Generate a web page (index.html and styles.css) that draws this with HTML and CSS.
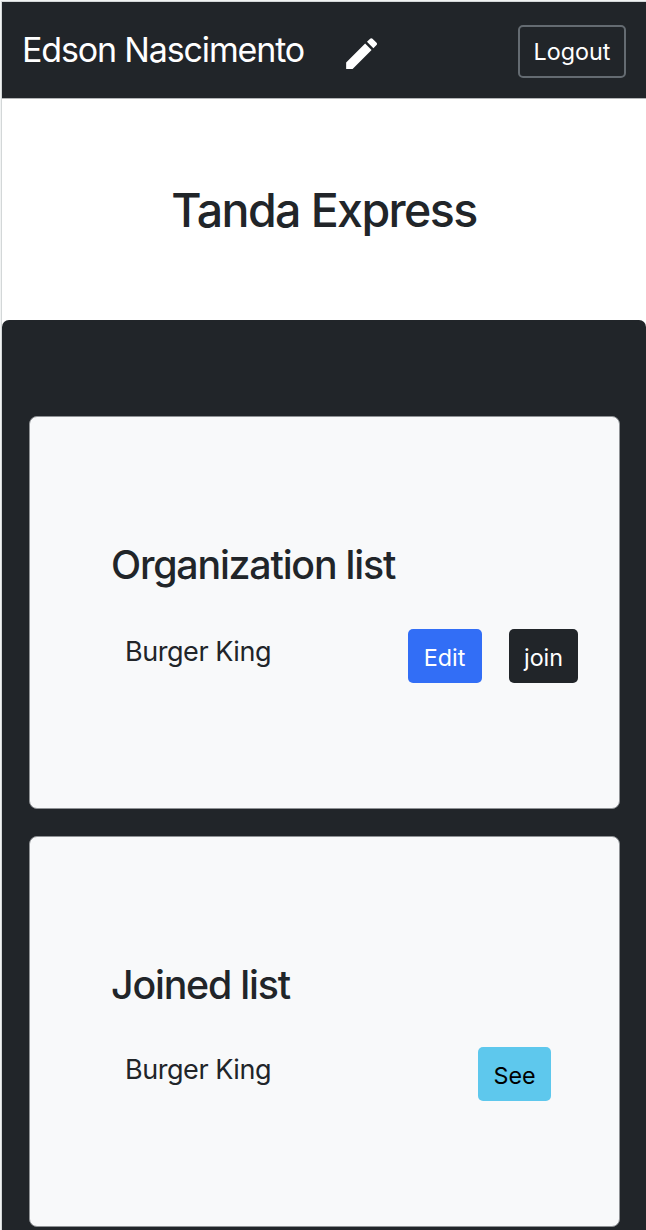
FILE: index.html
```html
<!DOCTYPE html>
<html lang="en">
<head>
<meta charset="utf-8">
<title>Tanda Express</title>
<link rel="stylesheet" href="styles.css">
</head>
<body>
<div class="app">
  <header class="navbar">
    <span class="user">Edson Nascimento</span>
    <svg class="pencil" viewBox="0 0 24 24" fill="currentColor"><path d="M3 17.25V21h3.75L17.81 9.94l-3.75-3.75L3 17.25zM20.71 7.04c.39-.39.39-1.02 0-1.41l-2.34-2.34c-.39-.39-1.02-.39-1.41 0l-1.83 1.83 3.75 3.75 1.83-1.83z"/></svg>
    <button class="btn logout">Logout</button>
  </header>
  <h1 class="title">Tanda Express</h1>
  <main class="panel">
    <section class="card">
      <h2 class="card-title">Organization list</h2>
      <div class="row">
        <span class="name">Burger King</span>
        <button class="btn edit">Edit</button>
        <button class="btn join">join</button>
      </div>
    </section>
    <section class="card joined">
      <h2 class="card-title">Joined list</h2>
      <div class="row">
        <span class="name">Burger King</span>
        <button class="btn see">See</button>
      </div>
    </section>
  </main>
</div>
</body>
</html>
```
FILE: styles.css
```css
* { box-sizing: border-box; }
body {
  margin: 0;
  height: 1230px;
  overflow: hidden;
  padding: 1px 0 0 1px;
  background: #f1f3f3;
  color: #212529;
  font-family: Inter, "Liberation Sans", sans-serif;
}
.app {
  height: 1229px;
  border: solid #d3d7d8;
  border-width: 1px 0 0 1px;
  background: #fff;
}
.navbar {
  display: flex;
  height: 97px;
  padding: 0 20px 0 21px;
  border-bottom: 1px solid #b3b5b7;
  background: #212529;
  color: #fff;
}
.user {
  width: 318px;
  margin-left: -1px;
  margin-right: 1px;
  padding-top: 28px;
  font-size: 34px;
  line-height: 40px;
  letter-spacing: -1.15px;
  white-space: nowrap;
}
.pencil {
  width: 41.2px;
  height: 41.2px;
  margin-top: 31px;
}
.btn {
  flex: none;
  height: 54px;
  padding: 4px 0 0;
  border: 0;
  border-radius: 5px;
  color: #fff;
  font: 23.3px/50px Inter, "Liberation Sans", sans-serif;
  text-align: center;
}
.logout {
  width: 108px;
  height: 53px;
  margin: 22.5px 0 0 auto;
  padding: 1px 0 0;
  border: 2px solid #646b71;
  line-height: 48px;
  background: transparent;
}
.title {
  height: 221px;
  margin: 0;
  padding-top: 83px;
  font-size: 46.5px;
  line-height: 56px;
  font-weight: 500;
  letter-spacing: -1.6px;
  text-align: center;
}
.panel {
  display: flex;
  flex-direction: column;
  gap: 27px;
  height: 910px;
  padding: 96px 26px 0 27px;
  border-radius: 7px 7px 0 0;
  background: #212529;
}
.card {
  height: 393px;
  padding: 124px 41px 0 81px;
  border: 1px solid #8f9295;
  border-radius: 8px;
  background: #f8f9fa;
}
.joined { height: 391px; }
.card-title {
  margin: 0 0 40px;
  font-size: 39.3px;
  line-height: 48px;
  font-weight: 500;
  letter-spacing: -1.2px;
  white-space: nowrap;
}
.row {
  display: flex;
  padding-left: 14px;
}
.name {
  flex: 1;
  padding-top: 3px;
  font-size: 27px;
  line-height: 40px;
  letter-spacing: -0.45px;
}
.edit { width: 74px; margin-right: 27.5px; background: #326ef6; }
.join { width: 69px; background: #212529; }
.joined .card-title { margin-bottom: 38px; }
.see { width: 73px; margin-right: 27px; background: #5ec8ed; color: #000; }
```
